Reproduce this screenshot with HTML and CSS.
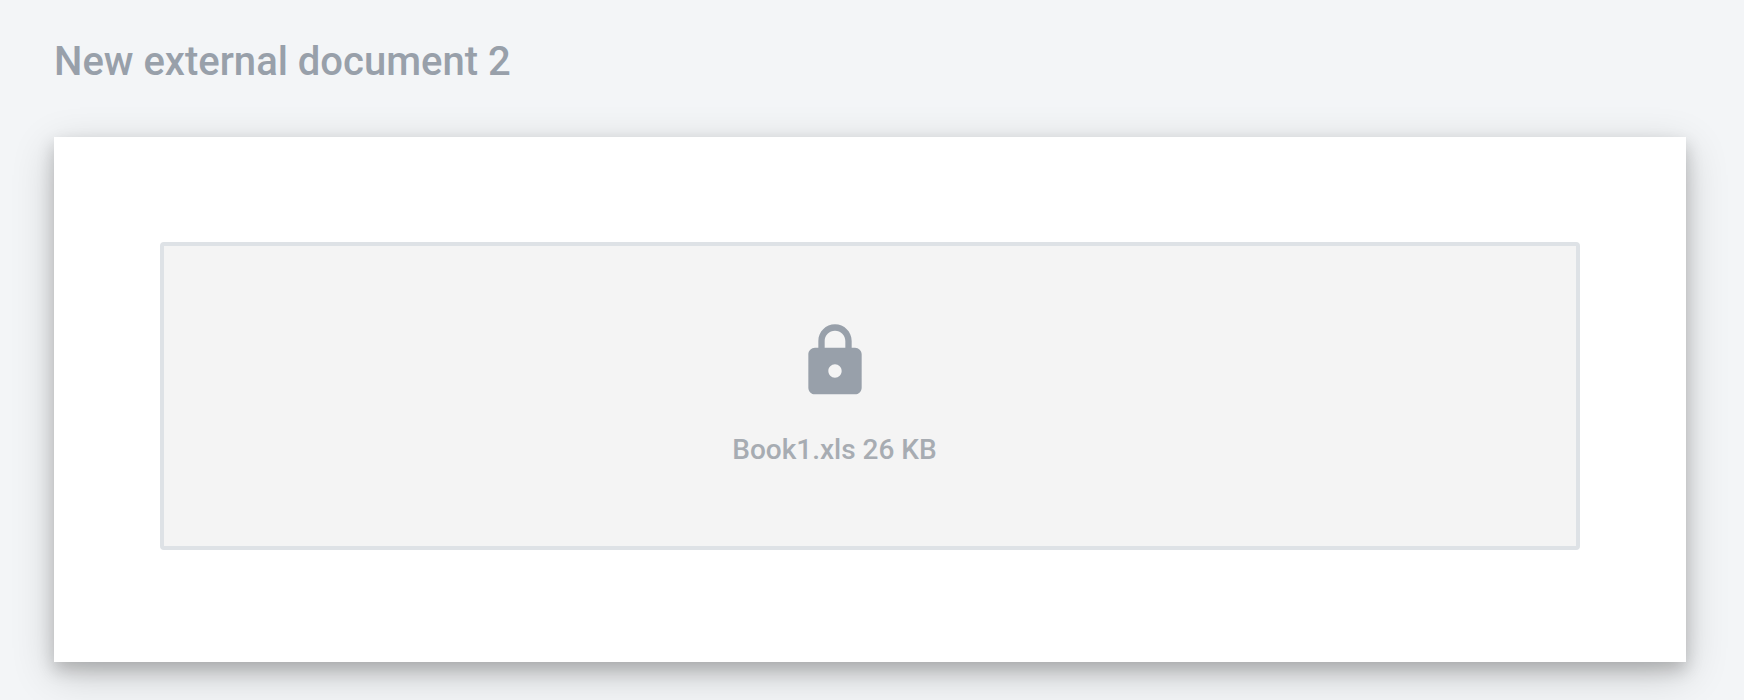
FILE: index.html
```html
<!DOCTYPE html>
<html lang="en">
<head>
<meta charset="utf-8">
<meta name="viewport" content="width=device-width, initial-scale=1">
<title>New external document 2</title>
<link rel="stylesheet" href="styles.css">
</head>
<body>
<main class="page">
  <h1 class="title">New external document 2</h1>
  <section class="card">
    <div class="file">
      <svg class="file-icon" viewBox="0 0 24 24" aria-hidden="true"><path d="M18 8h-1V6c0-2.760-2.240-5-5-5S7 3.240 7 6v2H6c-1.100 0-2 .9-2 2v10c0 1.100.9 2 2 2h12c1.100 0 2-.9 2-2V10c0-1.100-.9-2-2-2zm-6 9c-1.100 0-2-.9-2-2s.9-2 2-2 2 .9 2 2-.9 2-2 2zm3.100-9H8.900V6c0-1.710 1.390-3.100 3.100-3.100 1.710 0 3.100 1.390 3.100 3.100v2z"/></svg>
      <p class="file-name">Book1.xls 26 KB</p>
    </div>
  </section>
</main>
</body>
</html>
```
FILE: styles.css
```css
* {
  box-sizing: border-box;
}

body {
  margin: 0;
  background: #f3f5f7;
  font-family: Roboto, sans-serif;
}

.page {
  padding: 38px 58px 38px 54px;
}

.title {
  margin: 0 0 51px;
  color: #98a0aa;
  font-size: 40px;
  font-weight: 500;
  line-height: 48px;
}

.card {
  padding: 105px 106px 112px;
  background: #fff;
  box-shadow: 0 8px 16px rgba(0, 4, 0, 0.19), 0 12px 40px rgba(0, 4, 0, 0.19);
}

.file {
  display: flex;
  flex-direction: column;
  align-items: center;
  gap: 29px;
  padding: 75px 71px 76px 0;
  border: 4px solid #dee2e6;
  border-radius: 4px;
  background: #f4f4f4;
}

.file-icon {
  width: 80px;
  height: 80px;
  fill: #98a0aa;
}

.file-name {
  margin: 0;
  color: #a7acb2;
  font-size: 28px;
  font-weight: 500;
  line-height: 40px;
}
```
